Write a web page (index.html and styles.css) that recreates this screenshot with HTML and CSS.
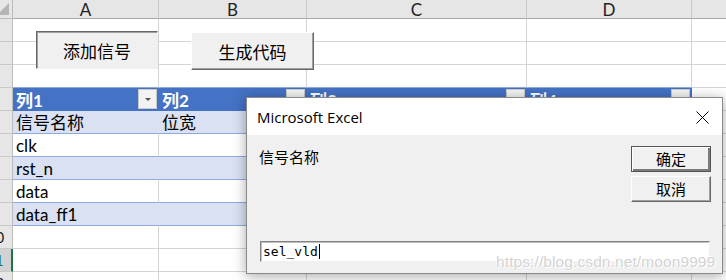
FILE: index.html
```html
<!DOCTYPE html>
<html lang="zh-CN">
<head>
  <meta charset="UTF-8" />
  <title>Excel - 信号表</title>
  <link rel="stylesheet" href="styles.css">
</head>
<body>

<div class="page">
  <div class="sheet">
    <!-- column headers -->
    <div class="c corner"><span class="tri"></span></div>
    <div class="c ch">A</div>
    <div class="c ch">B</div>
    <div class="c ch">C</div>
    <div class="c ch">D</div>
    <div class="c ch"></div>

    <!-- rows 1-3 -->
    <div class="c rh">1</div><div class="c"></div><div class="c"></div><div class="c"></div><div class="c"></div><div class="c"></div>
    <div class="c rh">2</div><div class="c"></div><div class="c"></div><div class="c"></div><div class="c"></div><div class="c"></div>
    <div class="c rh">3</div><div class="c edge"></div><div class="c edge"></div><div class="c edge"></div><div class="c edge"></div><div class="c"></div>

    <!-- table header -->
    <div class="c rh">4</div>
    <div class="c th">列1<span class="dd"></span></div>
    <div class="c th">列2<span class="dd"></span></div>
    <div class="c th">列3<span class="dd"></span></div>
    <div class="c th">列4<span class="dd"></span></div>
    <div class="c"></div>

    <div class="c rh">5</div>
    <div class="c band">信号名称</div><div class="c band">位宽</div><div class="c band"></div><div class="c band"></div><div class="c"></div>
    <div class="c rh">6</div>
    <div class="c row">clk</div><div class="c row"></div><div class="c row"></div><div class="c row"></div><div class="c"></div>
    <div class="c rh">7</div>
    <div class="c band">rst_n</div><div class="c band"></div><div class="c band"></div><div class="c band"></div><div class="c"></div>
    <div class="c rh">8</div>
    <div class="c row">data</div><div class="c row"></div><div class="c row"></div><div class="c row"></div><div class="c"></div>
    <div class="c rh">9</div>
    <div class="c band">data_ff1</div><div class="c band"></div><div class="c band"></div><div class="c band"></div><div class="c"></div>

    <div class="c rh">10</div><div class="c"></div><div class="c"></div><div class="c"></div><div class="c"></div><div class="c"></div>
    <div class="c rh sel">11</div><div class="c"></div><div class="c"></div><div class="c"></div><div class="c"></div><div class="c"></div>
    <div class="c rh">12</div><div class="c"></div><div class="c"></div><div class="c"></div><div class="c"></div><div class="c"></div>
  </div>

  <button class="xl-btn pressed btn-add">添加信号</button>
  <button class="xl-btn btn-gen">生成代码</button>

  <div class="dialog">
    <div class="dlg-title">
      <span>Microsoft Excel</span>
      <svg class="close" width="13" height="13" viewBox="0 0 13 13">
        <path d="M0.5 0.5 L12.5 12.5 M12.5 0.5 L0.5 12.5" stroke="#000" stroke-width="1" fill="none"/>
      </svg>
    </div>
    <div class="dlg-body">
      <div class="dlg-top">
        <div class="prompt">信号名称</div>
        <div class="dlg-btns">
          <button class="win-btn default">确定</button>
          <button class="win-btn">取消</button>
        </div>
      </div>
      <div class="inputbox">sel_vld<span class="caret"></span></div>
    </div>
  </div>

  <div class="watermark">https://blog.csdn.net/moon9999</div>
</div>

</body>
</html>
```

FILE: styles.css
```css
body { margin: 0; background: #fff; overflow: hidden; }
.page { position: relative; width: 726px; height: 280px; overflow: hidden; }

/* grid of cells; the row header is scrolled partly out of view */
.sheet { display: grid; grid-template-columns: 34px 146px 148px 220px 165px 60px; grid-template-rows: 19px; grid-auto-rows: 23px; margin-left: -21px; font-family: Lato, "Noto Sans CJK SC", sans-serif; font-size: 17px; color: #000; }
.c { box-sizing: border-box; border-right: 1px solid #d4d4d4; border-bottom: 1px solid #d4d4d4; display: flex; align-items: flex-end; padding: 0 0 0 3px; line-height: 21px; white-space: nowrap; overflow: hidden; position: relative; }
.corner { background: #e6e6e6; border-color: #bcbcbc; }
.tri { position: absolute; right: 3px; bottom: 3px; width: 0; height: 0; border-left: 12px solid transparent; border-bottom: 12px solid #b5b5b5; }
.ch { background: #e6e6e6; justify-content: center; align-items: center; padding: 0; border-right-color: #c8c8c8; border-bottom-color: #a8a8a8; font-size: 17px; color: #222; }
.rh { background: #e6e6e6; justify-content: center; align-items: center; padding: 0; border-right-color: #bcbcbc; border-bottom-color: #c8c8c8; font-size: 15px; color: #222; }
.rh.sel { background: #d2d2d2; color: #217346; border-right: 2px solid #217346; }
.edge { border-bottom-color: #8ea9db; }

/* table */
.th { background: #4472c4; color: #fff; font-weight: bold; border-right-color: #4472c4; border-bottom: none; padding-left: 3px; }
.dd { position: absolute; right: 1px; top: 1px; width: 19px; height: 20px; box-sizing: border-box; background: #f3f3f3; border: 1px solid #c9c9c9; }
.dd::after { content: ""; position: absolute; left: 6px; top: 8px; border-left: 3px solid transparent; border-right: 3px solid transparent; border-top: 3px solid #555; }
.band { background: #d9e1f2; border-right-color: #d9e1f2; border-bottom-color: #8ea9db; }
.row { border-bottom-color: #8ea9db; }

/* sheet buttons */
.xl-btn { position: absolute; box-sizing: border-box; background: #f0f0f0; font-family: "Noto Sans CJK SC", sans-serif; font-size: 17px; color: #000; padding: 0; border: 1px solid; border-color: #fff #696969 #696969 #fff; box-shadow: inset -1px -1px 0 #a0a0a0; }
.xl-btn.pressed { border-color: #696969 #f0f0f0 #f0f0f0 #696969; box-shadow: inset 1px 1px 0 #a0a0a0; }
.btn-add { left: 36px; top: 31px; width: 122px; height: 38px; }
.btn-gen { left: 191px; top: 32px; width: 123px; height: 38px; }

/* input dialog */
.dialog { position: absolute; left: 246px; top: 97px; width: 477px; height: 177px; box-sizing: border-box; border: 1px solid #8a8a8a; background: #f0f0f0; box-shadow: 0 2px 12px rgba(0,0,0,0.35); display: flex; flex-direction: column; }
.dlg-title { height: 37px; background: #fff; display: flex; align-items: center; justify-content: space-between; padding: 0 13px 0 10px; font-family: "Open Sans", "Noto Sans", sans-serif; font-size: 15px; color: #000; }
.close { display: block; margin-top: 1px; }
.dlg-body { padding: 11px 11px 0 12px; }
.dlg-top { display: flex; justify-content: space-between; }
.prompt { font-family: "Noto Sans CJK SC", sans-serif; font-size: 15px; line-height: 20px; padding-top: 1px; }
.dlg-btns { display: flex; flex-direction: column; gap: 4px; }
.win-btn { width: 80px; height: 26px; box-sizing: border-box; background: #f0f0f0; font-family: "Noto Sans CJK SC", sans-serif; font-size: 15px; color: #000; padding: 0; border: 1px solid; border-color: #fff #696969 #696969 #fff; box-shadow: inset -1px -1px 0 #a0a0a0; line-height: 22px; }
.win-btn.default { border: 1px solid #555; box-shadow: inset 1px 1px 0 #fff, inset -2px -2px 0 #7a7a7a; }
.inputbox { margin: 39px 1px 0 1px; height: 21px; box-sizing: border-box; background: #fff; border: 1px solid; border-color: #828282 #f0f0f0 #f0f0f0 #828282; box-shadow: inset 1px 1px 0 #c0c0c0; font-family: "DejaVu Sans Mono", monospace; font-size: 13px; line-height: 19px; padding-left: 2px; display: flex; align-items: center; }
.caret { display: inline-block; width: 1px; height: 15px; background: #000; margin-left: 1px; }

.watermark { position: absolute; left: 496px; top: 253px; font-family: "Liberation Sans", Arial, sans-serif; font-size: 15.5px; color: rgba(205,205,205,0.9); text-shadow: 0 0 1px #fff, 1px 1px 0 #fff, -1px -1px 0 #fff; letter-spacing: 0.1px; }
```
